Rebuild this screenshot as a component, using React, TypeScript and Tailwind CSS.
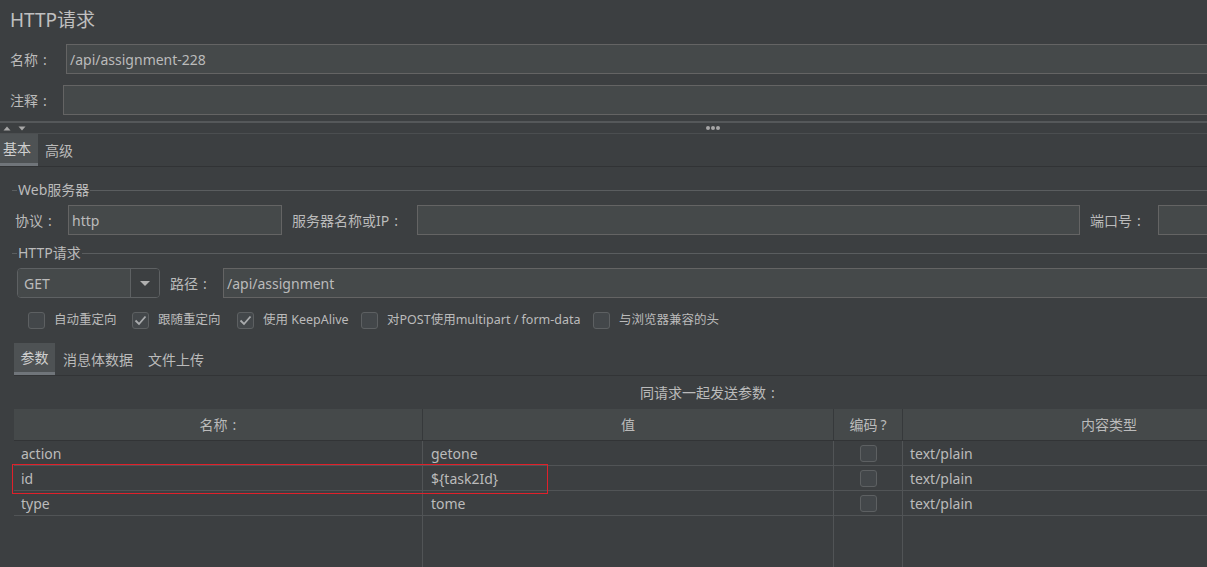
import React from 'react';

const Field: React.FC<{ value?: string; className?: string }> = ({ value, className = '' }) => (
    <div className={`h-[30px] bg-[#45494a] border border-[#646464] flex items-center pl-[3px] text-[14px] text-[#bbbbbb] whitespace-nowrap ${className}`}>
        {value}
    </div>
);

// label with a centred colon, like the Swing labels
const Label: React.FC<{ text: string; className?: string }> = ({ text, className = '' }) => (
    <span className={`text-[14px] whitespace-nowrap ${className}`}>
        {text}
        <span className="ml-[5px]">:</span>
    </span>
);

const Check: React.FC<{ checked?: boolean }> = ({ checked }) => (
    <div className="w-[17px] h-[17px] rounded-[3px] border border-[#5d6062] bg-[#43474a] flex items-center justify-center shrink-0">
        {checked && (
            <svg width="13" height="11" viewBox="0 0 13 11">
                <path d="M1.5 5.5 L5 9 L11.5 1.5" fill="none" stroke="#a9abad" strokeWidth="1.8" />
            </svg>
        )}
    </div>
);

const GroupTitle: React.FC<{ title: string }> = ({ title }) => (
    <div className="h-[16px] flex items-center">
        <div className="ml-[12px] w-[5px] h-px bg-[#5a5d5f]" />
        <span className="px-[1px] text-[14px] leading-[16px] text-[#bbbbbb]">{title}</span>
        <div className="flex-1 h-px bg-[#5a5d5f]" />
    </div>
);

const params = [
    { name: 'action', value: 'getone', type: 'text/plain' },
    { name: 'id', value: '${task2Id}', type: 'text/plain' },
    { name: 'type', value: 'tome', type: 'text/plain' },
];

const options = [
    { label: '自动重定向', checked: false, box: 'ml-[28px]', w: 'w-[78px]' },
    { label: '跟随重定向', checked: true, box: '', w: 'w-[79px]' },
    { label: '使用 KeepAlive', checked: true, box: '', w: 'w-[98px]' },
    { label: '对POST使用multipart / form-data', checked: false, box: '', w: 'w-[206px]' },
    { label: '与浏览器兼容的头', checked: false, box: '', w: 'w-[140px]' },
];

const cols = 'grid grid-cols-[409px_411px_69px_412px]';

export default function App() {
    return (
        <div className="w-[1207px] h-[567px] overflow-hidden bg-[#3c3f41] text-[#bbbbbb] font-['Noto_Sans','Noto_Sans_CJK_SC',sans-serif]">
            <div className="w-[1410px] flex flex-col">
                {/* header */}
                <div className="h-[44px] pl-[10px] pt-[6px] text-[19px] leading-[28px] text-[#c0c0c0]">HTTP请求</div>

                <div className="flex items-center h-[30px]">
                    <Label text="名称" className="w-[66px] pl-[10px]" />
                    <Field value="/api/assignment-228" className="flex-1" />
                </div>
                <div className="flex items-center h-[30px] mt-[11px]">
                    <Label text="注释" className="w-[63px] pl-[10px]" />
                    <Field className="flex-1" />
                </div>

                {/* splitter */}
                <div className="mt-[6px] h-[2px] bg-[#55585a]" />
                <div className="h-[10px] relative">
                    <svg className="absolute left-[3px] top-[3px]" width="24" height="5" viewBox="0 0 24 5">
                        <path d="M0.5 4.5 L4 0.5 L7.5 4.5 Z" fill="#a8a8a8" />
                        <path d="M15.5 0.5 L19 4.5 L22.5 0.5 Z" fill="#a8a8a8" />
                    </svg>
                    <div className="absolute left-[706px] top-[3px] flex gap-[1px]">
                        <div className="w-[4px] h-[4px] rounded-full bg-[#a6a6a6]" />
                        <div className="w-[4px] h-[4px] rounded-full bg-[#a6a6a6]" />
                        <div className="w-[4px] h-[4px] rounded-full bg-[#a6a6a6]" />
                    </div>
                </div>
                <div className="h-px bg-[#4b4e50]" />

                {/* main tabs */}
                <div className="h-[33px] flex items-stretch border-b border-[#313335]">
                    <div className="w-[38px] bg-[#4e5254] border-b-[3px] border-[#70757a] flex items-center pl-[3px] text-[14px] text-[#d0d0d0]">基本</div>
                    <div className="flex items-center pl-[7px] text-[14px]">高级</div>
                </div>

                {/* web server */}
                <div className="mt-[15px]">
                    <GroupTitle title="Web服务器" />
                </div>
                <div className="mt-[7px] flex items-center h-[30px]">
                    <Label text="协议" className="w-[68px] pl-[15px]" />
                    <Field value="http" className="w-[214px]" />
                    <Label text="服务器名称或IP" className="w-[135px] pl-[10px]" />
                    <Field className="w-[663px]" />
                    <Label text="端口号" className="w-[78px] pl-[10px]" />
                    <Field className="flex-1" />
                </div>

                {/* http request */}
                <div className="mt-[10px]">
                    <GroupTitle title="HTTP请求" />
                </div>
                <div className="mt-[7px] flex items-center h-[30px]">
                    <div className="ml-[17px] w-[143px] h-[30px] rounded-[4px] border border-[#5e6163] flex overflow-hidden">
                        <div className="flex-1 bg-[#45494a] flex items-center pl-[6px] text-[14px] border-r border-[#5e6163]">GET</div>
                        <div className="w-[28px] bg-[#3c3f41] flex items-center justify-center">
                            <svg width="10" height="5" viewBox="0 0 10 5">
                                <path d="M0 0 L10 0 L5 5 Z" fill="#b0b0b0" />
                            </svg>
                        </div>
                    </div>
                    <Label text="路径" className="w-[63px] pl-[10px]" />
                    <Field value="/api/assignment" className="flex-1" />
                </div>

                {/* options */}
                <div className="mt-[14px] h-[17px] flex items-center text-[12.5px]">
                    {options.map((o) => (
                        <React.Fragment key={o.label}>
                            <div className={o.box}><Check checked={o.checked} /></div>
                            <span className={`ml-[9px] whitespace-nowrap ${o.w}`}>{o.label}</span>
                        </React.Fragment>
                    ))}
                </div>

                {/* sub tabs */}
                <div className="mt-[14px] ml-[14px] h-[33px] flex items-stretch border-b border-[#323436]">
                    <div className="w-[41px] bg-[#4e5254] border-b-[3px] border-[#70757a] flex items-center justify-center text-[14px] text-[#d0d0d0]">参数</div>
                    <div className="flex items-center pl-[8px] text-[14px]">消息体数据</div>
                    <div className="flex items-center pl-[15px] text-[14px]">文件上传</div>
                </div>

                <div className="mt-[8px] h-[18px] pl-[640px] text-[14px] leading-[18px]">
                    同请求一起发送参数<span className="ml-[5px]">:</span>
                </div>

                {/* params table */}
                <div className="mt-[7px] ml-[14px] relative">
                    <div className={`${cols} h-[32px] bg-[#45494a] border-b border-[#323436] text-[14px]`}>
                        <div className="flex items-center justify-center border-r border-[#36393b]">
                            名称<span className="ml-[5px]">:</span>
                        </div>
                        <div className="flex items-center justify-center border-r border-[#36393b]">值</div>
                        <div className="flex items-center justify-center border-r border-[#36393b]">
                            编码<span className="ml-[3px]">?</span>
                        </div>
                        <div className="flex items-center justify-center">内容类型</div>
                    </div>
                    {params.map((p) => (
                        <div key={p.name} className={`${cols} h-[25px] border-b border-[#515456] text-[14px]`}>
                            <div className="flex items-center pl-[7px] border-r border-[#515456]">{p.name}</div>
                            <div className="flex items-center pl-[8px] border-r border-[#515456]">{p.value}</div>
                            <div className="flex items-center justify-center border-r border-[#515456]"><Check /></div>
                            <div className="flex items-center pl-[7px]">{p.type}</div>
                        </div>
                    ))}
                    <div className={`${cols} h-[60px]`}>
                        <div className="border-r border-[#515456]" />
                        <div className="border-r border-[#515456]" />
                        <div className="border-r border-[#515456]" />
                        <div />
                    </div>
                    {/* highlight annotation */}
                    <div className="absolute left-[-2px] top-[55px] w-[536px] h-[30px] border-[1.5px] border-[#e0202a]" />
                </div>
            </div>
        </div>
    );
}
